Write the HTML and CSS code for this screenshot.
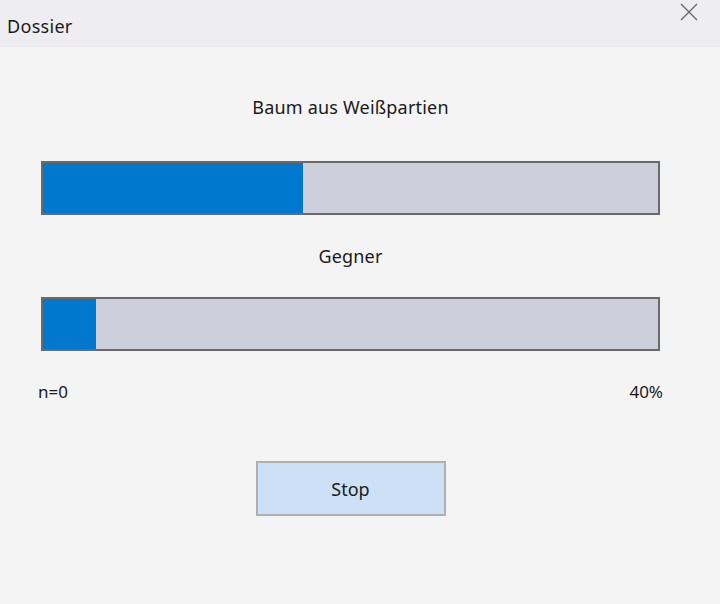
FILE: index.html
```html
<!DOCTYPE html>
<html>
<head>
<meta charset="utf-8">
<link rel="stylesheet" href="styles.css">
</head>
<body>
<div class="window">
  <div class="titlebar">
    <span class="title">Dossier</span>
    <svg class="close" width="18" height="18" viewBox="0 0 18 18"><path d="M1 1 L17 17 M17 1 L1 17" stroke="#666" stroke-width="1.3" fill="none"/></svg>
  </div>
  <div class="content">
    <div class="label first">Baum aus Weißpartien</div>
    <div class="bar"><div class="fill" style="width:42.2%"></div></div>
    <div class="label second">Gegner</div>
    <div class="bar"><div class="fill" style="width:8.6%"></div></div>
    <div class="scale"><span>n=0</span><span>40%</span></div>
    <div class="actions"><button class="stop">Stop</button></div>
  </div>
</div>
</body>
</html>
```
FILE: styles.css
```css
html, body {
  margin: 0;
  padding: 0;
}
body {
  width: 720px;
  height: 604px;
  background: #f4f4f4;
  font-family: "Noto Sans", "Open Sans", sans-serif;
  color: #1a1a1a;
  overflow: hidden;
}
.titlebar {
  height: 47px;
  background: #eeeef2;
  display: flex;
  align-items: center;
  justify-content: space-between;
  padding: 0 22px 0 7px;
  box-sizing: border-box;
}
.title {
  font-size: 18px;
  margin-top: 5px;
  letter-spacing: 0.3px;
}
.close {
  margin-top: -24px;
}
.content {
  padding: 48px 60px 0 41px;
  display: flex;
  flex-direction: column;
}
.label {
  width: 619px;
  text-align: center;
  font-size: 18px;
  line-height: 24px;
  letter-spacing: 0.2px;
}
.first {
  margin-bottom: 42px;
}
.second {
  margin-top: 29px;
  margin-bottom: 29px;
}
.bar {
  height: 54px;
  width: 619px;
  box-sizing: border-box;
  border: 2px solid #6a6a6a;
  background: #ccced9;
}
.fill {
  height: 100%;
  background: #0078ce;
}
.scale {
  width: 625px;
  display: flex;
  justify-content: space-between;
  margin: 30px 0 0 -3px;
  font-size: 17px;
  line-height: 22px;
}
.actions {
  width: 619px;
  display: flex;
  justify-content: center;
  margin-top: 58px;
}
.stop {
  width: 190px;
  height: 55px;
  background: #cce0f6;
  border: 2px solid #b0b0b0;
  font-family: "Noto Sans", "Open Sans", sans-serif;
  font-size: 18px;
  color: #1a1a1a;
  padding: 0;
}
```
